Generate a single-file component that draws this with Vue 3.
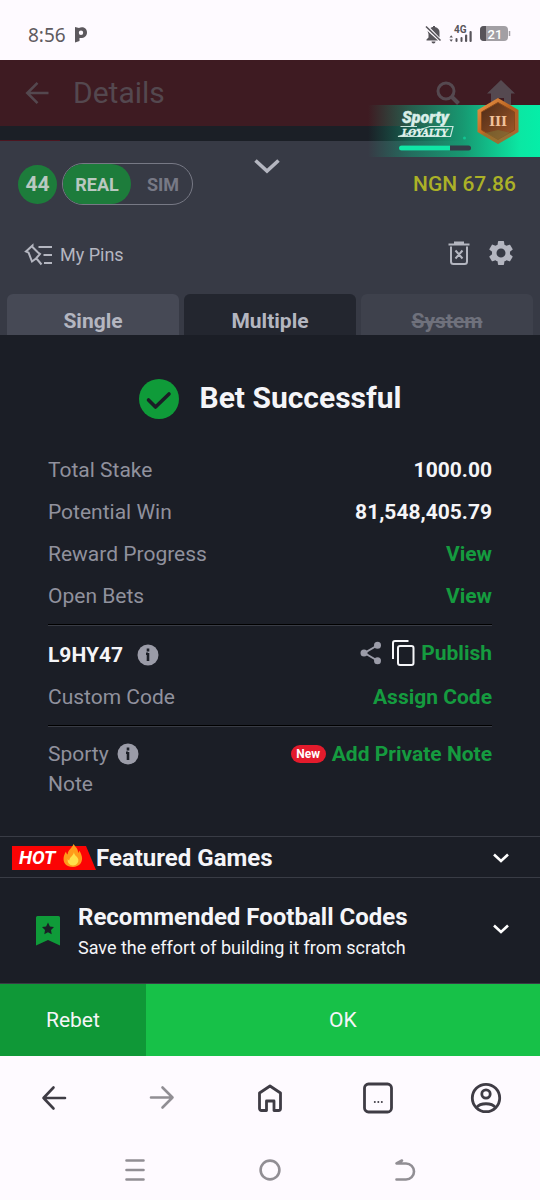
<script setup>
import { ref } from 'vue'

const mode = ref('REAL')
const modes = ['REAL', 'SIM']
const tabs = [
  { name: 'Single', state: '' },
  { name: 'Multiple', state: 'active' },
  { name: 'System', state: 'off' },
]
const summary = [
  { label: 'Total Stake', value: '1000.00' },
  { label: 'Potential Win', value: '81,548,405.79' },
  { label: 'Reward Progress', link: 'View' },
  { label: 'Open Bets', link: 'View' },
]
</script>

<template>
  <div class="screen">
    <div class="status">
      <span class="clock">8:56</span>
      <svg class="palm" width="14" height="18" viewBox="0 0 14 18"><path d="M1 1v15.500l4.500-1.500v-3C10 12.500 13 10 13 6.500 13 1.500 8 0 5 2L1 1zM7 4.500a2.200 2.200 0 1 1 0 4.400 2.200 2.200 0 0 1 0-4.400z" fill="#5c585d" fill-rule="evenodd" /></svg>
      <span class="grow"></span>
      <svg width="88" height="20" viewBox="0 0 88 20">
        <g fill="#57545a">
          <path d="M5.500 3C6.500 2.200 7.500 2 8 2V1h2v1c3 .7 4.500 2.700 4.500 5v5.500L5.500 3zM2.500 6L13 15.500H1.500v-1l2-2V9zM6.500 16.500h4a2 2 0 0 1-4 0z" />
          <path d="M1 1.500L15.500 15.500" stroke="#57545a" stroke-width="1.600" />
          <path d="M24.500 12.500l1.700-2.200 1.700 2.200zM24.500 14.500l1.700 2.200 1.700-2.200z" />
          <rect x="30.500" y="13" width="2" height="4" rx="1" />
          <rect x="35.500" y="12" width="2" height="5" rx="1" />
          <rect x="40" y="9.500" width="2.200" height="7.500" rx="1" />
          <rect x="44.500" y="6" width="2.200" height="11" rx="1" />
          <text x="29" y="8" font-size="10" font-weight="700">4G</text>
        </g>
        <rect x="55" y="1" width="28" height="15" rx="4" fill="#a29fa4" />
        <path d="M59 1h2v15h-2a4 4 0 0 1-4-4V5a4 4 0 0 1 4-4z" fill="#57545a" />
        <path d="M84.500 6v5" stroke="#a29fa4" stroke-width="1.500" />
        <text x="62.500" y="13.500" font-size="13" font-weight="500" fill="#fff">21</text>
      </svg>
    </div>

    <header class="top">
      <button class="icon" aria-label="Back">
        <svg width="24" height="24" viewBox="0 0 24 24" fill="none" stroke="#54484f" stroke-width="2.600"><path d="M23.500 12H2.500M12.500 1.800L2.300 12l10.200 10.200" /></svg>
      </button>
      <h1>Details</h1>
      <span class="grow"></span>
      <button class="icon" aria-label="Search">
        <svg width="24" height="24" viewBox="0 0 24 24" fill="none" stroke="#554950"><circle cx="10" cy="10" r="8" stroke-width="3" /><path d="M15.500 15.500l7 7" stroke-width="4" /></svg>
      </button>
      <button class="icon" aria-label="Home">
        <svg width="30" height="26" viewBox="0 0 30 26" fill="#554950"><path d="M15 0l14 13.500h-4V26h-7v-8h-6v8H5V13.500H1z" /></svg>
      </button>
    </header>
    <div class="gap-strip"><i></i></div>

    <aside class="loyalty">
      <svg width="172" height="60" viewBox="0 0 172 60">
        <defs>
          <linearGradient id="bronze" x1="0" y1="0" x2="1" y2="1"><stop offset="0" stop-color="#f09a4c" /><stop offset=".5" stop-color="#b9621f" /><stop offset="1" stop-color="#a8663a" /></linearGradient>
          <linearGradient id="bronzeIn" x1="0" y1="0" x2="1" y2="1"><stop offset="0" stop-color="#4c2a17" /><stop offset="1" stop-color="#a35a2a" /></linearGradient>
        </defs>
        <text x="34" y="25" font-size="16" font-weight="900" font-style="italic" fill="#d9eee8" stroke="#d9eee8" stroke-width=".4">Sporty</text>
        <path d="M32.500 28.500H49M62 28.500h23l-2.500 10H30zL30 38.500" fill="none" stroke="#c9e6dd" stroke-width="1.200" />
        <text class="slab" x="34" y="38" font-size="9" font-weight="700" font-style="italic" fill="#e2f3ee" stroke="#e2f3ee" stroke-width=".3">LOYALTY</text>
        <rect x="31" y="47.500" width="72" height="5" rx="2.500" fill="#353b47" />
        <path d="M33.500 47.500H82v5H33.500a2.500 2.500 0 0 1 0-5z" fill="#10e6a6" />
        <circle cx="96.500" cy="40" r="1.500" fill="#12c592" />
        <path d="M130 0l20.500 12v22L130 46l-20.500-12V12z" fill="url(#bronze)" />
        <path d="M130 4.500l16.500 9.500v18l-16.500 9.500-16.500-9.500V14z" fill="url(#bronzeIn)" stroke="#8a4819" />
        <path d="M113 36l17-4 17 4-17 10z" fill="#7a7f3c" opacity=".45" />
        <text class="slab" x="130" y="28" text-anchor="middle" font-size="13" font-weight="700" fill="#f1c29a">III</text>
      </svg>
    </aside>

    <section class="slip">
      <div class="account">
        <span class="count">44</span>
        <div class="toggle">
          <button v-for="m in modes" :key="m" :class="{ on: mode === m }" @click="mode = m">{{ m }}</button>
        </div>
        <button class="icon collapse" aria-label="Collapse">
          <svg width="28" height="18" viewBox="0 0 28 18" fill="none" stroke="#b4b6c0" stroke-width="3.600"><path d="M2.500 3.500L14 14 25.500 3.500" /></svg>
        </button>
        <span class="balance">NGN 67.86</span>
      </div>
      <div class="pins">
        <svg width="30" height="24" viewBox="0 0 30 24" fill="none" stroke="#b4b6c0" stroke-width="2"><path d="M8.500 2.500l-6.500 6 2.500 1 3.500 9 4-3 4-4.500-2-1.500-5.500-5.500zM12.500 15.500l5 6M14.500 4H28M19.500 12H28M20 20h8" /></svg>
        <a href="#pins">My Pins</a>
        <span class="grow"></span>
        <button class="icon" aria-label="Clear betslip">
          <svg width="22" height="26" viewBox="0 0 22 26" fill="none" stroke="#b4b6c0" stroke-width="2"><path d="M.5 4.500h21M6 2.500h10M3 6.500v15a2.500 2.500 0 0 0 2.500 2.500h11a2.500 2.500 0 0 0 2.500-2.500v-15M7.500 10.500l7 8M14.500 10.500l-7 8" /></svg>
        </button>
        <button class="icon" aria-label="Settings">
          <svg width="30" height="30" viewBox="0 0 24 24" fill="#b4b6c0"><path d="M19.140 12.940c.04-.3.060-.61.060-.94 0-.32-.02-.64-.07-.94l2.030-1.580c.18-.14.230-.41.120-.61l-1.920-3.320c-.12-.22-.37-.29-.59-.22l-2.390.96c-.5-.38-1.030-.7-1.620-.94l-.36-2.540c-.04-.24-.24-.41-.48-.41h-3.840c-.24 0-.43.17-.47.41l-.36 2.540c-.59.24-1.130.57-1.620.94l-2.390-.96c-.22-.08-.47 0-.59.220L2.740 8.870c-.12.210-.08.470.12.610l2.030 1.580c-.05.3-.09.630-.09.940s.02.640.07.940l-2.030 1.580c-.18.140-.23.410-.12.610l1.920 3.320c.12.220.37.290.59.220l2.390-.96c.5.380 1.030.7 1.620.94l.36 2.540c.05.240.24.410.48.410h3.840c.24 0 .44-.17.470-.41l.36-2.540c.59-.24 1.130-.56 1.620-.94l2.390.96c.22.080.47 0 .59-.22l1.920-3.320c.12-.22.070-.47-.12-.61l-2.010-1.580zM12 15.600c-1.980 0-3.600-1.620-3.600-3.600s1.620-3.600 3.600-3.600 3.600 1.620 3.600 3.600-1.620 3.600-3.600 3.600z" /></svg>
        </button>
      </div>
      <div class="tabs" role="tablist">
        <button v-for="t in tabs" :key="t.name" role="tab" :class="t.state" :disabled="t.state === 'off'">{{ t.name }}</button>
      </div>
    </section>

    <main>
      <div class="result">
        <svg width="40" height="40" viewBox="0 0 40 40"><circle cx="20" cy="20" r="20" fill="#0f9b39" /><path d="M9.500 21l7 7L30 15" fill="none" stroke="#1b1e26" stroke-width="3.600" stroke-linejoin="round" stroke-linecap="round" /></svg>
        <h2>Bet Successful</h2>
      </div>
      <div class="details">
        <div v-for="s in summary" :key="s.label" class="row">
          <span>{{ s.label }}</span>
          <a v-if="s.link" href="#view">{{ s.link }}</a>
          <strong v-else>{{ s.value }}</strong>
        </div>
        <hr />
        <div class="row code">
          <strong>L9HY47</strong>
          <button class="icon info" aria-label="About booking code">
            <svg width="22" height="22" viewBox="0 0 22 22"><circle cx="11" cy="11" r="10.500" fill="#9b9ca8" /><path d="M11 4.500v3M11 9v8M9 9.800h2" fill="none" stroke="#1b1e26" stroke-width="2.600" /></svg>
          </button>
          <span class="grow"></span>
          <div class="code-actions">
            <button class="icon" aria-label="Share">
              <svg width="22" height="24" viewBox="0 0 22 24" fill="#9b9ca8"><path d="M18 4L4.500 12 18 20" fill="none" stroke="#9b9ca8" stroke-width="2" /><circle cx="4" cy="12" r="3.500" /><circle cx="17.500" cy="4.200" r="3.500" /><circle cx="17.500" cy="19.800" r="3.500" /></svg>
            </button>
            <button class="icon copy" aria-label="Copy">
              <svg width="24" height="28" viewBox="0 0 24 28" fill="none" stroke="#f5f5f8" stroke-width="2"><path d="M2 20V4a2 2 0 0 1 2-2h13.500" /><rect x="7" y="7" width="15.500" height="19" rx="2" /></svg>
            </button>
            <a href="#publish">Publish</a>
          </div>
        </div>
        <div class="row"><span>Custom Code</span><a href="#assign">Assign Code</a></div>
        <hr />
        <div class="row note">
          <span class="sporty">Sporty Note</span>
          <button class="icon" aria-label="About notes">
            <svg width="22" height="22" viewBox="0 0 22 22"><circle cx="11" cy="11" r="10.500" fill="#9b9ca8" /><path d="M11 4.500v3M11 9v8M9 9.800h2" fill="none" stroke="#1b1e26" stroke-width="2.600" /></svg>
          </button>
          <span class="grow"></span>
          <span class="new">New</span>
          <a href="#note">Add Private Note</a>
        </div>
      </div>

      <div class="featured">
        <span class="hot">HOT</span>
        <svg class="flame" width="20" height="24" viewBox="0 0 20 24"><path d="M10.500 0c2 3 5 5 4.500 9 .8-.6 1-1.600 1-2.500 5 6 4.500 16-6 16.500C-1 22.500-1 13.500 3 7.500c.2 1.500.8 2.500 1.700 3C4.500 6 9 4.500 10.500 0z" fill="#ff9b1a" /><path d="M11 8c0 3.500 3.500 4.500 4.200 7 .8 3.500-1.700 6.500-5.200 6.500s-6-3-5.200-6.500c.3.900.8 1.400 1.500 1.500C6.500 13 10.500 12 11 8z" fill="#ffe04a" /></svg>
        <h3>Featured Games</h3>
        <button class="icon" aria-label="Expand featured games"><svg width="16" height="10" viewBox="0 0 16 10" fill="none" stroke="#fff" stroke-width="2.600"><path d="M1 1.500l7 6.500 7-6.500" /></svg></button>
      </div>
      <div class="codes">
        <svg width="24" height="30" viewBox="0 0 24 30"><path d="M1.500 0h21A1.500 1.500 0 0 1 24 1.500V29.500l-12-5.500L0 29.500V1.500A1.500 1.500 0 0 1 1.500 0z" fill="#0f9b39" /><path d="M12 6.500l1.900 3.900 4.100.6-3 3 .7 4.300-3.700-2-3.700 2 .7-4.300-3-3 4.100-.6z" fill="#1b1e26" /></svg>
        <div class="codes-text">
          <h3>Recommended Football Codes</h3>
          <p>Save the effort of building it from scratch</p>
        </div>
        <button class="icon" aria-label="Expand codes"><svg width="16" height="10" viewBox="0 0 16 10" fill="none" stroke="#fff" stroke-width="2.600"><path d="M1 1.500l7 6.500 7-6.500" /></svg></button>
      </div>
    </main>

    <div class="actions">
      <button class="rebet">Rebet</button>
      <button class="ok">OK</button>
    </div>

    <nav class="browser">
      <button class="icon" aria-label="Page back"><svg width="26" height="26" viewBox="0 0 26 26" fill="none" stroke="#3f3c45" stroke-width="2.600" stroke-linecap="round" stroke-linejoin="round"><path d="M24 13H2.500M12.500 2.500L2.500 13l10 10.500" /></svg></button>
      <button class="icon" aria-label="Page forward"><svg width="26" height="26" viewBox="0 0 26 26" fill="none" stroke="#918e94" stroke-width="2.600" stroke-linecap="round" stroke-linejoin="round"><path d="M2 12.500h21.500M13.500 2.500l10 10-10 10" /></svg></button>
      <button class="icon" aria-label="Home page"><svg width="26" height="30" viewBox="0 0 26 30" fill="none" stroke="#3f3c45" stroke-width="2.800" stroke-linejoin="round"><path d="M2.500 10L13 3l10.500 7v15.500a2 2 0 0 1-2 2H17V18H9.500v9.500h-5a2 2 0 0 1-2-2z" /></svg></button>
      <button class="icon" aria-label="Open tabs"><svg width="32" height="32" viewBox="0 0 32 32"><rect x="2.500" y="2" width="27" height="28" rx="4" fill="none" stroke="#3f3c45" stroke-width="2.800" /><g fill="#3f3c45"><circle cx="12.800" cy="20" r="1" /><circle cx="16.300" cy="20" r="1" /><circle cx="19.800" cy="20" r="1" /></g></svg></button>
      <button class="icon" aria-label="Profile"><svg width="32" height="32" viewBox="0 0 32 32" fill="none" stroke="#3f3c45" stroke-width="2.800"><circle cx="16" cy="16" r="13.700" /><circle cx="16" cy="12" r="4.200" /><path d="M6.500 25.500c4-5 15-5 19 0" /></svg></button>
    </nav>
    <nav class="system">
      <button class="icon" aria-label="Recent apps"><svg width="22" height="24" viewBox="0 0 22 24" stroke="#918e94" stroke-width="2.600" stroke-linecap="round"><path d="M2.500 2.500h17M2.500 12h17M2.500 21.500h17" /></svg></button>
      <button class="icon" aria-label="Home screen"><svg width="22" height="24" viewBox="0 0 22 24" fill="none" stroke="#918e94" stroke-width="2.600"><circle cx="11" cy="12" r="9.400" /></svg></button>
      <button class="icon" aria-label="System back"><svg width="22" height="24" viewBox="0 0 22 24" fill="none" stroke="#918e94" stroke-width="2.600" stroke-linecap="round" stroke-linejoin="round"><path d="M8 2.500L2.500 5.500H12c4.500 0 8 3.500 8 8s-3.500 8-8 8H2.500" /></svg></button>
    </nav>
  </div>
</template>

<style>
body { margin: 0; background: #fefaff; }
</style>

<style scoped>
.screen { position: relative; font-family: Roboto, "Liberation Sans", sans-serif; color: #f5f5f8; background: #fefaff; }
* { box-sizing: border-box; }
svg { display: block; flex: none; }
button { font: inherit; color: inherit; border: 0; padding: 0; background: none; cursor: pointer; }
a { color: #159b3f; text-decoration: none; }
h1, h2, h3, p { margin: 0; }
.grow { flex: 1; }
.icon { display: flex; flex: none; align-items: center; justify-content: center; }

.status { display: flex; align-items: center; height: 60px; padding: 9px 27px 0 28px; color: #5f5b60; }
.clock { font: 19px "Noto Sans", sans-serif; margin-right: 8px; }

.top { display: flex; align-items: center; height: 66px; padding: 0 24px 0 25px; background: #3e1b22; color: #54484f; }
.top h1 { margin-left: 24px; font-size: 30px; font-weight: 400; line-height: 36px; }
.top .icon + .icon { margin-left: 26px; }
.gap-strip { display: flex; align-items: flex-end; height: 15px; background: #1b1f26; }
.gap-strip i { width: 60px; height: 1px; background: #4d1520; }

.loyalty { position: absolute; top: 98px; right: 0; }
.loyalty::before { content: ""; position: absolute; inset: 7px 0 1px 0; background: linear-gradient(90deg, rgba(14, 232, 165, 0) 0%, rgba(16, 160, 120, .5) 25%, #179871 55%, #0be7a3 88%, #05eea8 100%); }
.loyalty svg { position: relative; }
.slab { font-family: "DejaVu Serif", serif; }

.slip { background: #373a45; height: 194px; padding-top: 22px; display: flex; flex-direction: column; }
.account { position: relative; display: flex; align-items: center; height: 42px; padding: 0 24px 0 18px; }
.count { display: flex; align-items: center; justify-content: center; width: 39px; height: 39px; border-radius: 50%; background: #1d7c3b; color: #b9c8c0; font-size: 21px; font-weight: 700; }
.toggle { display: flex; width: 131px; height: 42px; margin-left: 5px; border: 1px solid #777985; border-radius: 21px; font-size: 18px; font-weight: 700; }
.toggle button { flex: 1; padding-left: 3px; color: #777985; border-radius: 20px; }
.toggle .on { flex: 0 0 68px; padding: 0; background: #1d7c3b; color: #b9c8c0; }
.collapse { position: absolute; left: calc(50% - 17px); top: -6px; }
.balance { margin-left: auto; color: #abb127; font-size: 21px; font-weight: 500; }
.pins { display: flex; align-items: center; height: 30px; margin-top: 35px; padding: 0 24px; font-size: 18px; }
.pins a { margin-left: 6px; color: #b4b6c0; line-height: 30px; }
.pins .icon { padding-bottom: 4px; }
.pins .icon + .icon { margin-left: 16px; }
.tabs { display: grid; grid-template-columns: repeat(3, 1fr); gap: 5px; height: 41px; margin-top: auto; padding: 0 7px; font-size: 21px; font-weight: 700; }
.tabs button { padding-top: 12px; border-radius: 6px 6px 0 0; background: #464955; color: #b4b6c0; }
.tabs .active { background: #23262f; }
.tabs .off { background: #3e414c; color: #6f717c; text-decoration: line-through; }

main { background: #1b1e26; }
.result { display: flex; justify-content: center; align-items: center; gap: 21px; padding: 44px 0 30px; }
.result h2 { padding-bottom: 2px; font-size: 30px; font-weight: 700; line-height: 38px; }
.details { padding: 0 48px 37px; font-size: 21px; line-height: 30px; color: #90919d; }
.row { display: flex; align-items: center; min-height: 42px; }
.row > span:first-child + a, .row > span:first-child + strong { margin-left: auto; }
.row strong { color: #f5f5f8; font-weight: 700; }
.row a { font-weight: 700; }
hr { height: 2px; margin: 7px 0; border: 0; background: #000; border-bottom: 1px solid #393c45; }
.code { min-height: 43px; }
.code-actions { display: flex; align-items: center; padding-bottom: 4px; }
.info { margin-left: 14px; }
.copy { margin: 0 6px 0 9px; }
.note { align-items: flex-start; padding-top: 5px; }
.note .icon { height: 30px; }
.sporty { width: 69px; }
.note .new { display: flex; align-items: center; justify-content: center; width: 35px; height: 18px; margin: 6px 6px 0 0; border-radius: 9px; background: #e31b2c; color: #fff; font-size: 12px; font-weight: 700; }

.featured { display: flex; align-items: center; height: 42px; padding: 2px 31px 0 12px; border: solid #393c45; border-width: 1px 0; }
.featured .icon, .codes .icon { margin-left: auto; }
.hot { width: 84px; height: 24px; padding-left: 7px; background: #fb0404; clip-path: polygon(0 0, 74px 0, 100% 100%, 0 100%); color: #fff; font-size: 19px; line-height: 24px; font-weight: 700; font-style: italic; }
.flame { position: relative; margin: 0 13px 4px -33px; }
h3 { font-size: 24px; line-height: 30px; font-weight: 700; }
.codes { display: flex; align-items: center; height: 106px; padding: 0 31px 0 36px; border-bottom: 1px solid #393c45; }
.codes .icon { padding-bottom: 4px; }
.codes-text { margin-left: 18px; }
.codes p { margin-top: 4px; font-size: 18px; line-height: 24px; }

.actions { display: flex; height: 72px; font-size: 21px; }
.rebet { flex: 0 0 27%; background: #0f9837; }
.ok { flex: 1; background: #17c148; }
.browser { display: grid; grid-template-columns: repeat(5, 1fr); height: 84px; justify-items: center; align-items: center; }
.system { display: grid; grid-template-columns: repeat(3, 1fr); height: 60px; padding: 0 67px; justify-items: center; align-items: center; }
</style>
